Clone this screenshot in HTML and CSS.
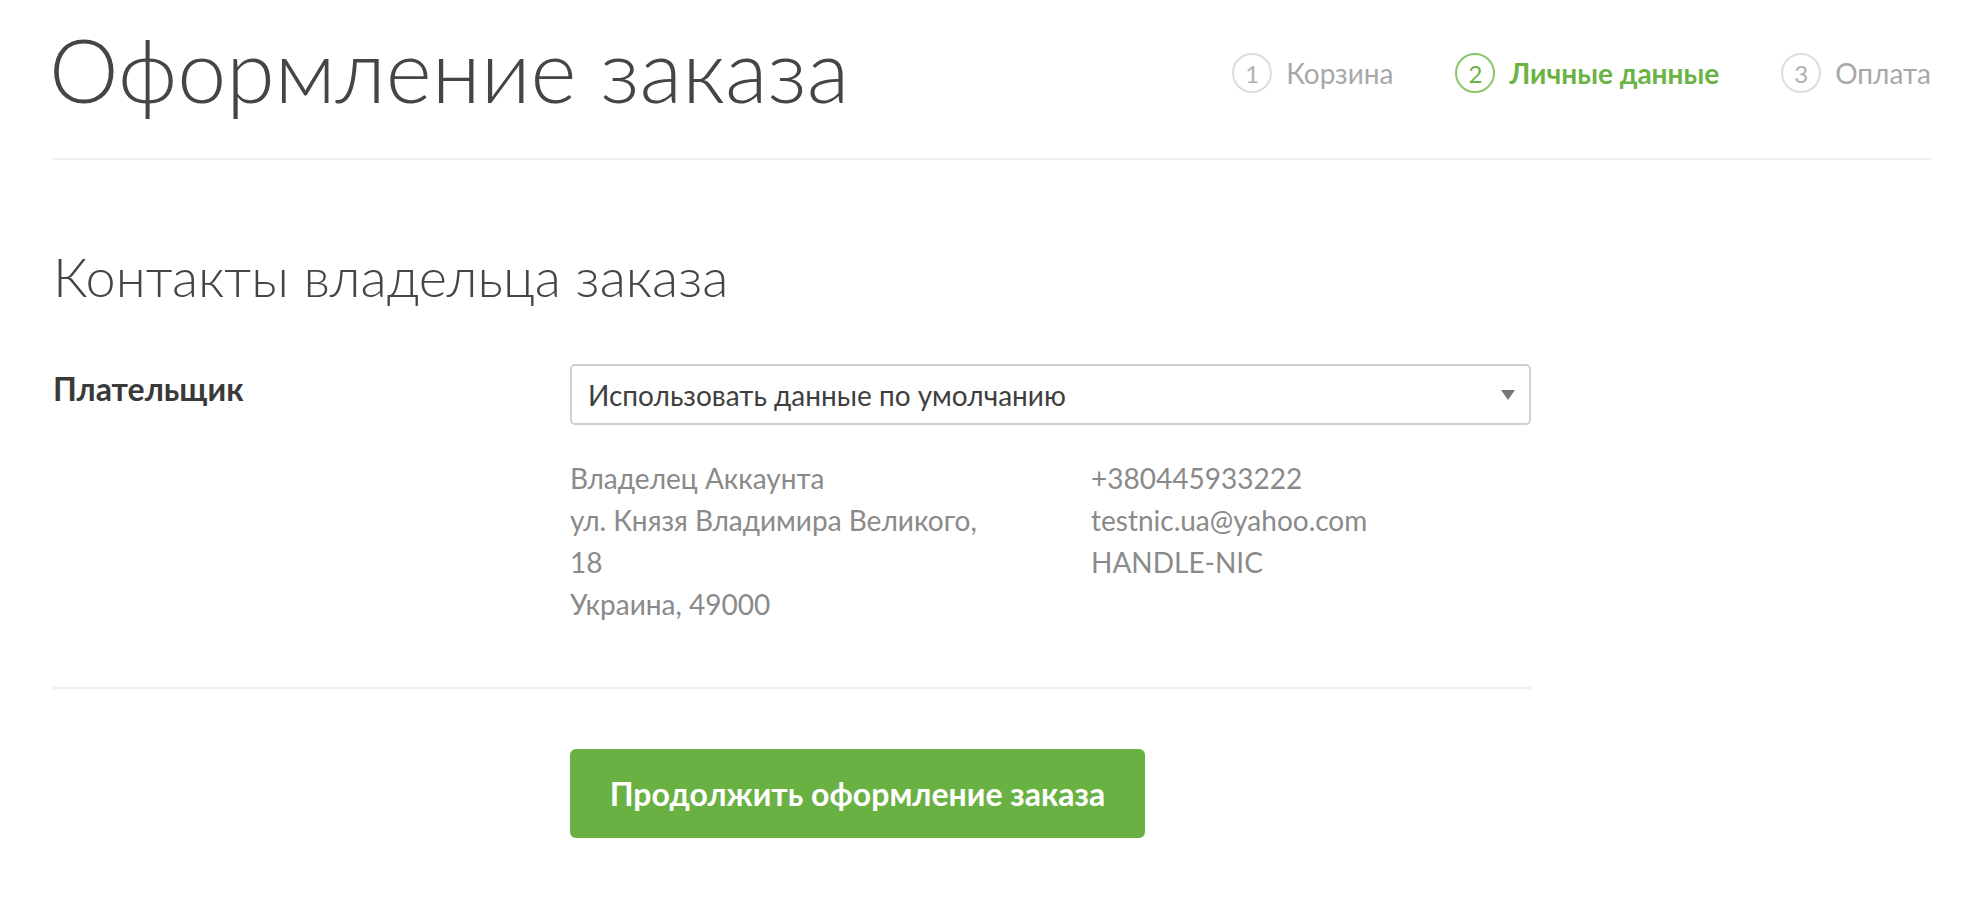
FILE: index.html
```html
<!DOCTYPE html>
<html lang="ru">
<head>
    <meta charset="utf-8">
    <title>Оформление заказа</title>
    <link rel="stylesheet" href="styles.css">
</head>
<body>

    <div class="page">
        <header class="top">
            <h1 class="title">Оформление заказа</h1>
            <ol class="steps">
                <li class="step"><span class="num">1</span>Корзина</li>
                <li class="step active"><span class="num">2</span>Личные данные</li>
                <li class="step"><span class="num">3</span>Оплата</li>
            </ol>
        </header>

        <section class="contacts">
            <h2 class="subtitle">Контакты владельца заказа</h2>

            <div class="row">
                <div class="label">Плательщик</div>
                <div class="field">
                    <div class="select">
                        <span>Использовать данные по умолчанию</span>
                        <span class="arrow"></span>
                    </div>
                    <div class="info">
                        <div class="col">
                            Владелец Аккаунта<br>
                            ул. Князя Владимира Великого, 18<br>
                            Украина, 49000
                        </div>
                        <div class="col">
                            +380445933222<br>
                            testnic.ua@yahoo.com<br>
                            HANDLE-NIC
                        </div>
                    </div>
                </div>
            </div>
        </section>

        <div class="actions">
            <button type="button" class="btn">Продолжить оформление заказа</button>
        </div>
    </div>

</body>
</html>
```

FILE: styles.css
```css
body {
    margin: 0;
    background: #fff;
    font-family: Lato, "Open Sans", sans-serif;
    color: #444;
}
.page {
    padding: 0 35px 0 53px;
}
.top {
    display: flex;
    justify-content: space-between;
    align-items: flex-start;
    border-bottom: 2px solid #eee;
    height: 160px;
    box-sizing: border-box;
}
.title {
    margin: 16px 0 0 -4px;
    font-size: 88px;
    font-weight: 300;
    line-height: 106px;
    color: #454545;
}
.steps {
    list-style: none;
    display: flex;
    gap: 62px;
    margin: 53px 0 0;
    padding: 0;
}
.step {
    display: flex;
    align-items: center;
    font-size: 28px;
    color: #a8a8a8;
}
.num {
    width: 36px;
    height: 36px;
    border: 2px solid #ddd;
    border-radius: 50%;
    display: flex;
    align-items: center;
    justify-content: center;
    margin-right: 14px;
    font-size: 24px;
    color: #b0b0b0;
}
.step.active {
    color: #6ab344;
    font-weight: bold;
}
.step.active .num {
    border-color: #8bc66b;
    color: #6ab344;
    font-weight: normal;
}
.contacts {
    width: 1478px;
    border-bottom: 2px solid #eee;
    padding-bottom: 62px;
}
.subtitle {
    margin: 0;
    padding-top: 82px;
    font-size: 54px;
    font-weight: 300;
    line-height: 70px;
    color: #454545;
}
.row {
    display: flex;
    margin-top: 52px;
}
.label {
    width: 517px;
    flex-shrink: 0;
    font-size: 32px;
    font-weight: bold;
    color: #3a3a3a;
    padding-top: 5px;
}
.field {
    flex: 1;
}
.select {
    height: 61px;
    border: 2px solid #cfcfcf;
    border-radius: 5px;
    box-sizing: border-box;
    display: flex;
    align-items: center;
    justify-content: space-between;
    padding: 0 14px 0 16px;
    font-size: 28px;
    color: #3f3f3f;
}
.arrow {
    width: 0;
    height: 0;
    border-left: 7px solid transparent;
    border-right: 7px solid transparent;
    border-top: 10px solid #777;
}
.info {
    display: grid;
    grid-template-columns: 420px 1fr;
    column-gap: 101px;
    margin-top: 32px;
    font-size: 28px;
    line-height: 42px;
    color: #8a8a8a;
}
.actions {
    padding: 60px 0 0 517px;
}
.btn {
    background: #6ab144;
    color: #fff;
    border: none;
    border-radius: 6px;
    width: 575px;
    height: 89px;
    font-family: Lato, sans-serif;
    font-size: 32px;
    font-weight: bold;
    cursor: pointer;
}
.btn:hover {
    background: #5da03a;
}
```
